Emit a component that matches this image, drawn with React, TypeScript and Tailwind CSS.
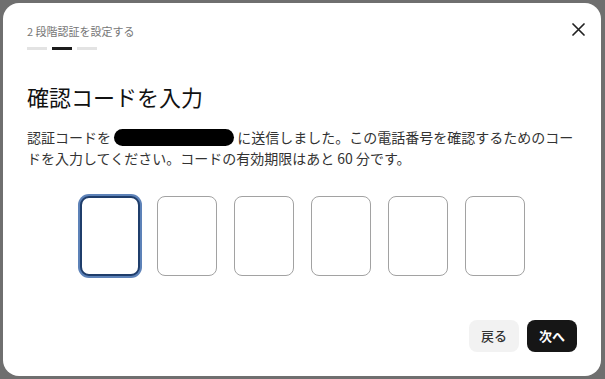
import { useState } from 'react'

const font = { fontFamily: '"Noto Sans CJK JP", "Noto Sans", sans-serif' }

export default function App() {
  const [code] = useState(['', '', '', '', '', ''])

  return (
    <div className="w-[605px] h-[379px] bg-[#6f6f6f] pt-[3px] pl-[3px] overflow-hidden" style={font}>
      {/* Modal */}
      <div className="relative w-[598px] h-[373px] bg-white rounded-[16px] px-6 pt-5 pb-6 flex flex-col">
        {/* Close */}
        <button className="absolute right-[13px] top-[17px] w-[19px] h-[19px] flex items-center justify-center text-[#222]">
          <svg width="13" height="13" viewBox="0 0 13 13" fill="none" stroke="currentColor" strokeWidth="1.7" strokeLinecap="round">
            <path d="M1 1L12 12M12 1L1 12" />
          </svg>
        </button>

        {/* Header */}
        <div className="text-[11px] leading-4 text-[#767676]">2 段階認証を設定する</div>
        <div className="flex gap-[5px] mt-2">
          <div className="w-5 h-[3px] bg-[#e3e3e3]" />
          <div className="w-5 h-[3px] bg-[#1c1c1c]" />
          <div className="w-5 h-[3px] bg-[#e3e3e3]" />
        </div>

        <h2 className="mt-[30px] text-[22px] leading-8 font-normal text-[#111]">確認コードを入力</h2>

        <p className="mt-[15px] text-[14px] leading-[21px] text-[#333]">
          <span>認証コードを </span>
          <span className="inline-block align-middle w-[120px] h-[17px] rounded-full bg-black -mt-[3px]" />
          <span> に送信しました。この電話番号を確認するためのコードを入力してください。コードの有効期限はあと 60 分です。</span>
        </p>

        {/* Code inputs */}
        <div className="flex justify-center gap-[17px] mt-[27px]">
          {code.map((c, i) => (
            <div
              key={i}
              className={
                i === 0
                  ? 'w-[60px] h-[80px] rounded-[9px] border-2 border-[#1f3d6b] ring-2 ring-[#5d82b8] bg-white'
                  : 'w-[60px] h-[80px] rounded-[8px] border border-[#a2a2a2] bg-white'
              }
            >
              {c}
            </div>
          ))}
        </div>

        {/* Footer */}
        <div className="mt-auto flex justify-end gap-2">
          <button className="w-[50px] h-8 rounded-lg bg-[#f2f2f2] text-[13px] font-medium text-[#333]">戻る</button>
          <button className="w-[50px] h-8 rounded-lg bg-[#161616] text-[13px] font-bold text-white">次へ</button>
        </div>
      </div>
    </div>
  )
}
